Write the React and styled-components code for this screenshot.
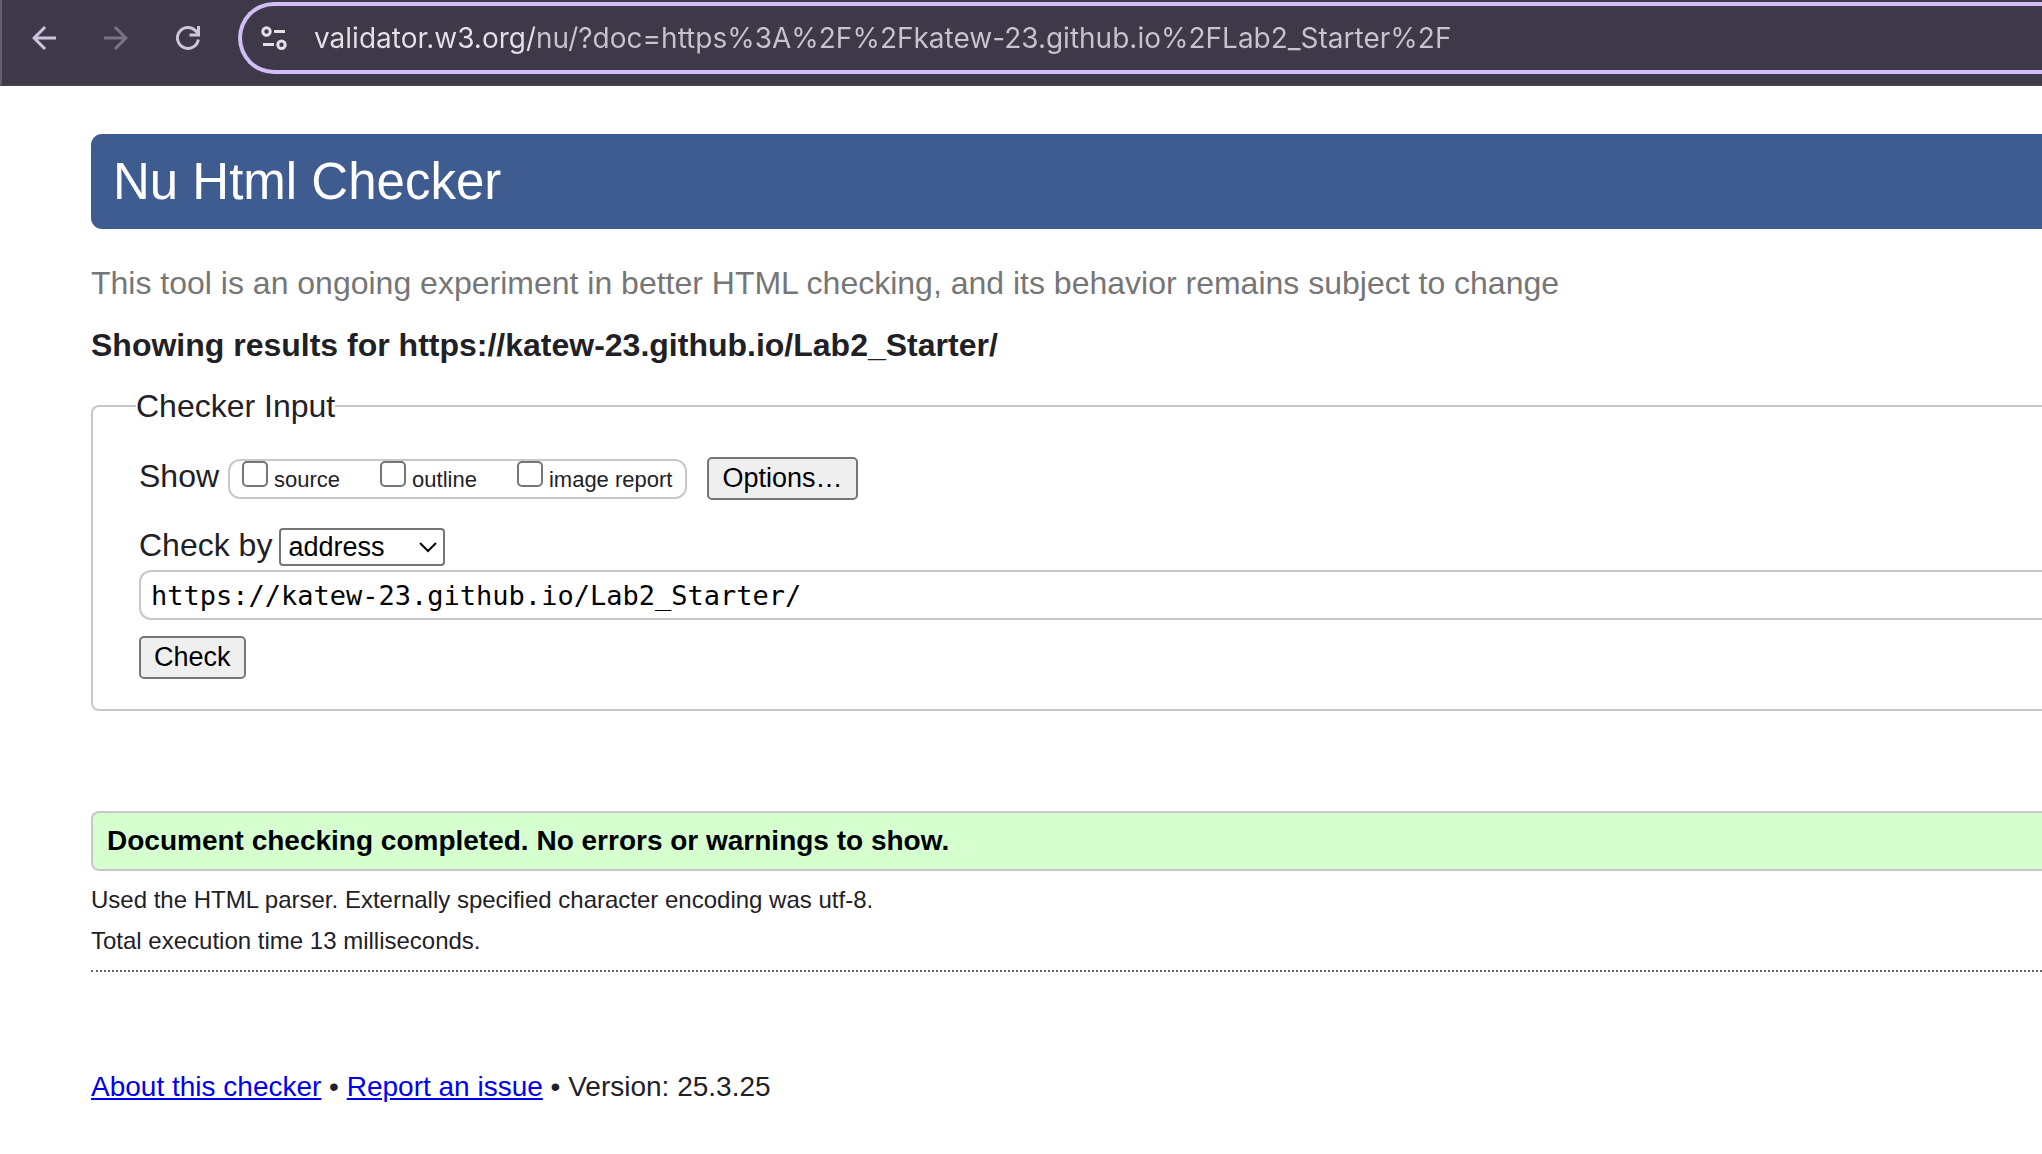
import React, { useState } from "react";
import styled, { createGlobalStyle } from "styled-components";

const GlobalStyle = createGlobalStyle`
  *, *::before, *::after { box-sizing: border-box; }
  body {
    margin: 0;
    background: #fff;
    color: #1f2126;
    font-family: "Liberation Sans", Arial, Helvetica, sans-serif;
    overflow-x: hidden;
  }
`;

const Toolbar = styled.nav`
  display: flex;
  align-items: flex-start;
  height: 86px;
  padding: 2px 0 0 24px;
  background: #3e3949;
  border-left: 2px solid #625e6d;
  border-bottom: 2px solid #474147;
`;

const NavButton = styled.button`
  display: flex;
  align-items: center;
  height: 72px;
  margin-right: 36px;
  padding: 0;
  border: 0;
  background: none;
  color: ${(p) => (p.disabled ? "#787283" : "#cfc4dd")};
  svg { display: block; width: 36px; height: 36px; }
`;

const AddressBar = styled.form`
  display: flex;
  flex: 1;
  align-items: center;
  height: 72px;
  margin-left: -4px;
  padding-left: 14px;
  border: 4px solid #d1bdf8;
  border-right: 0;
  border-radius: 36px 0 0 36px;
  color: #e4dfe6;
`;

const SiteIcon = styled.svg`
  flex: none;
  width: 36px;
  height: 36px;
  margin-right: 22px;
`;

const UrlInput = styled.input`
  flex: 1;
  min-width: 0;
  height: 48px;
  padding: 0;
  border: 0;
  outline: 0;
  font: 28px/48px Inter, Roboto, sans-serif;
  color: #c8c4cb;
  -webkit-text-fill-color: transparent;
  background: linear-gradient(90deg, #e6e1e7 220px, #c8c4cb 220px);
  -webkit-background-clip: text;
  background-clip: text;
`;

const Page = styled.main`
  padding: 48px 0 40px 91px;
`;

const Banner = styled.h1`
  margin: 0 0 34px;
  padding: 0 22px;
  border-radius: 11px 0 0 11px;
  background: #3f5c91;
  color: #fff;
  font-size: 51px;
  font-weight: 400;
  line-height: 95px;
`;

const Notice = styled.p`
  margin: 0 0 22px;
  color: #767676;
  font-size: 32px;
  line-height: 40px;
`;

const ResultsHeading = styled.h2`
  margin: 0 0 23px;
  font-size: 32px;
  line-height: 40px;
`;

const InputBox = styled.fieldset`
  margin: 0;
  padding: 33px 0 30px 46px;
  border: 2px solid #c8c8c8;
  border-right: 0;
  border-radius: 8px 0 0 8px;
  font-size: 32px;
  line-height: 36px;
`;

const Legend = styled.legend`
  margin-left: -3px;
  padding: 0;
`;

const Row = styled.div`
  display: flex;
  align-items: baseline;
  gap: ${(p) => p.$gap}px;
  margin-bottom: ${(p) => p.$after}px;
`;

const ShowGroup = styled.div`
  display: flex;
  align-items: baseline;
  gap: 40px;
  margin-right: 11px;
  padding: 0 13px 0 12px;
  border: 2px solid #c8c8c8;
  border-radius: 12px;
`;

const CheckLabel = styled.label`
  display: flex;
  align-items: baseline;
  gap: 6px;
  font-size: 22px;
  line-height: 34px;
`;

const Checkbox = styled.input`
  appearance: none;
  width: 26px;
  height: 26px;
  margin: 0;
  border: 2px solid #767676;
  border-radius: 5px;
  background: #fff;
  &:checked { background: #767676; }
`;

const Button = styled.button`
  height: 43px;
  padding: 0 13px;
  border: 2px solid #767676;
  border-radius: 5px;
  background: #efefef;
  color: #000;
  font: 27px/39px "Liberation Sans", Arial, sans-serif;
`;

const SelectWrap = styled.span`
  display: grid;
  align-items: center;
  > * { grid-area: 1 / 1; }
  svg {
    justify-self: end;
    width: 18px;
    height: 12px;
    margin-right: 8px;
    pointer-events: none;
  }
`;

const Select = styled.select`
  appearance: none;
  width: 166px;
  height: 38px;
  padding: 0 7px;
  border: 2px solid #767676;
  border-radius: 4px;
  background: #fff;
  color: #000;
  font: 27px/34px "Liberation Sans", Arial, sans-serif;
`;

const DocInput = styled.input`
  display: block;
  width: 100%;
  height: 50px;
  margin-bottom: 16px;
  padding: 0 10px;
  border: 2px solid #c8c8c8;
  border-right: 0;
  border-radius: 12px 0 0 12px;
  background: #fff;
  color: #000;
  font: 27px/46px "DejaVu Sans Mono", monospace;
`;

const Success = styled.p`
  margin: 100px 0 8px;
  padding: 0 14px;
  border: 2px solid #c9c6ca;
  border-right: 0;
  border-radius: 8px 0 0 8px;
  background: #d6ffd0;
  color: #000;
  font-size: 28px;
  font-weight: 700;
  line-height: 56px;
`;

const Detail = styled.p`
  margin: 0;
  font-size: 24px;
  line-height: 41px;
`;

const Footer = styled.footer`
  margin-top: 9px;
  padding-top: 95px;
  border-top: 2px dotted #666;
  font-size: 28px;
  line-height: 40px;
`;

const Link = styled.a`
  color: #0000ee;
  text-decoration: underline;
`;

const REPORTS = ["source", "outline", "image report"];

export default function App() {
  const [url, setUrl] = useState(
    "validator.w3.org/nu/?doc=https%3A%2F%2Fkatew-23.github.io%2FLab2_Starter%2F"
  );
  const [doc, setDoc] = useState("https://katew-23.github.io/Lab2_Starter/");

  return (
    <>
      <GlobalStyle />
      <Toolbar aria-label="Browser">
        <NavButton aria-label="Back">
          <svg viewBox="0 0 24 24" fill="currentColor">
            <path d="M20 11H7.83l5.59-5.59L12 4l-8 8 8 8 1.41-1.41L7.83 13H20v-2z" />
          </svg>
        </NavButton>
        <NavButton aria-label="Forward" disabled>
          <svg viewBox="0 0 24 24" fill="currentColor">
            <path d="M12 4l-1.41 1.41L16.17 11H4v2h12.17l-5.58 5.59L12 20l8-8z" />
          </svg>
        </NavButton>
        <NavButton aria-label="Reload">
          <svg viewBox="0 0 24 24" fill="none" stroke="currentColor" strokeWidth="2">
            <path d="M18.9 13A7 7 0 1 1 17.2 7.3L18.7 9" />
            <path d="M19 4v6h-6" />
          </svg>
        </NavButton>
        <AddressBar onSubmit={(e) => e.preventDefault()}>
          <SiteIcon viewBox="0 0 36 36" fill="none" stroke="currentColor" strokeWidth="3">
            <circle cx="10.5" cy="11.5" r="3.7" />
            <path d="M18 11.5h11M7 24.5h11" />
            <circle cx="25.5" cy="24.8" r="3.7" />
          </SiteIcon>
          <UrlInput aria-label="Address" value={url} onChange={(e) => setUrl(e.target.value)} />
        </AddressBar>
      </Toolbar>
      <Page>
        <Banner>Nu Html Checker</Banner>
        <Notice>
          This tool is an ongoing experiment in better HTML checking, and its behavior remains subject to change
        </Notice>
        <ResultsHeading>Showing results for https://katew-23.github.io/Lab2_Starter/</ResultsHeading>
        <form onSubmit={(e) => e.preventDefault()}>
          <InputBox>
            <Legend>Checker Input</Legend>
            <Row $gap={9} $after={27}>
              <span>Show</span>
              <ShowGroup>
                {REPORTS.map((name) => (
                  <CheckLabel key={name}>
                    <Checkbox type="checkbox" />
                    {name}
                  </CheckLabel>
                ))}
              </ShowGroup>
              <Button type="button">Options…</Button>
            </Row>
            <Row $gap={7} $after={4}>
              <label htmlFor="docselect">Check by</label>
              <SelectWrap>
                <Select id="docselect" defaultValue="address">
                  <option value="address">address</option>
                </Select>
                <svg viewBox="0 0 18 12" fill="none" stroke="#000" strokeWidth="2">
                  <path d="M1 2l8 8 8-8" />
                </svg>
              </SelectWrap>
            </Row>
            <DocInput aria-label="Address" value={doc} onChange={(e) => setDoc(e.target.value)} />
            <Button type="submit">Check</Button>
          </InputBox>
        </form>
        <Success>Document checking completed. No errors or warnings to show.</Success>
        <Detail>Used the HTML parser. Externally specified character encoding was utf-8.</Detail>
        <Detail>Total execution time 13 milliseconds.</Detail>
        <Footer>
          <Link href="#about">About this checker</Link> • <Link href="#issues">Report an issue</Link> • Version: 25.3.25
        </Footer>
      </Page>
    </>
  );
}
